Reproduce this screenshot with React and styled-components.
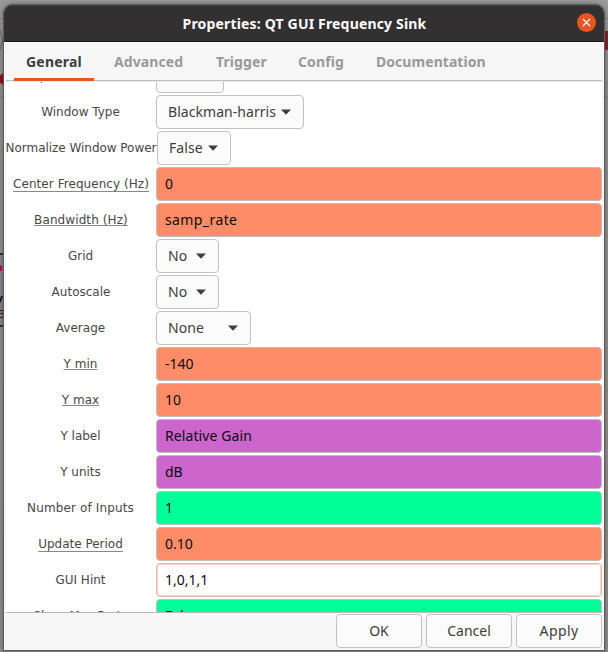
import React from 'react';
import styled, { createGlobalStyle } from 'styled-components';

const GlobalStyle = createGlobalStyle`
  *, *::before, *::after { box-sizing: border-box; }
  body { margin: 0; overflow: hidden; }
`;

const Desktop = styled.div`
  position: relative;
  width: 608px;
  height: 652px;
  padding: 5px 4px 2px 4px;
  background: linear-gradient(#9b9b9b, #8f8f8e 60px, #8e8d8b);
  overflow: hidden;
  font-family: "Noto Sans", "Open Sans", sans-serif;
`;

const Backdrop = styled.svg`
  position: absolute;
  inset: 0;
`;

const Dialog = styled.div`
  position: relative;
  display: flex;
  flex-direction: column;
  height: 645px;
  background: #f6f6f6;
  border-radius: 8px 8px 0 0;
  overflow: hidden;
  box-shadow: 0 0 0 1px #5c5c5c, 0 0 5px 1px rgba(0, 0, 0, 0.35);
`;

const TitleBar = styled.header`
  position: relative;
  display: flex;
  align-items: center;
  justify-content: center;
  flex: none;
  height: 37px;
  padding-left: 1px;
  background: #333031;
  border-top: 1px solid #454243;
  border-bottom: 1px solid #1c1a1b;
  color: #fff;
  font-size: 14px;
  font-weight: 700;
  letter-spacing: 0.17px;
`;

const CloseButton = styled.button`
  position: absolute;
  top: 7px;
  right: 8.5px;
  display: flex;
  align-items: center;
  justify-content: center;
  width: 19px;
  height: 19px;
  padding: 0;
  border: 0;
  border-radius: 50%;
  background: #e95420;
`;

const Tabs = styled.nav`
  display: flex;
  flex: none;
  height: 39px;
  margin: 0 2px;
  padding-left: 8px;
  border-bottom: 1px solid #bfbfbf;
`;

const Tab = styled.button`
  width: ${(p) => p.$width}px;
  height: 39px;
  margin-right: ${(p) => p.$gap || 0}px;
  padding: 3px 0 0 12px;
  border: 0;
  border-bottom: 3px solid ${(p) => (p.$active ? '#e95420' : 'transparent')};
  background: none;
  color: ${(p) => (p.$active ? '#3d3d3d' : '#999')};
  font: 700 14px/20px "Noto Sans", sans-serif;
  letter-spacing: ${(p) => p.$spacing}px;
  text-align: left;
  white-space: nowrap;
`;

const Viewport = styled.main`
  flex: none;
  height: 531px;
  margin: 0 2px;
  background: #fff;
  border-top: 1px solid #ececec;
  overflow: hidden;
`;

const Form = styled.div`
  display: grid;
  grid-auto-rows: 34px;
  row-gap: 2px;
  margin-top: -23px;
`;

const Row = styled.div`
  display: grid;
  grid-template-columns: 150px 446px;
  align-items: stretch;
`;

const Label = styled.label`
  align-self: center;
  justify-self: center;
  margin-right: ${(p) => (p.$wide ? 0 : 1)}px;
  color: #474747;
  font: 12px/16px "DejaVu Sans", sans-serif;
  letter-spacing: ${(p) => p.$spacing || 0}px;
  white-space: nowrap;
  text-decoration: ${(p) => (p.$underline === undefined ? 'none' : 'underline')};
  text-decoration-color: #888;
  text-decoration-thickness: 1px;
  text-decoration-skip-ink: none;
  text-underline-offset: ${(p) => p.$underline || 0}px;
`;

const fills = {
  real: '#ff8c69',
  string: '#cc66cc',
  int: '#00ff99',
  hint: '#ffffff',
};

const Entry = styled.div`
  display: flex;
  align-items: center;
  padding: 0 0 2px 8px;
  border: 1px solid #bebebe;
  border-radius: 4px;
  background: ${(p) => fills[p.$kind]};
  color: #0c0c0c;
  font-size: 14px;
  letter-spacing: ${(p) => p.$spacing || 0}px;
  ${(p) => p.$kind === 'hint' && 'border-color: #e8b5a8; box-shadow: inset 0 0 0 1px #f8d8ce;'}
`;

const Select = styled.button`
  display: flex;
  align-items: center;
  justify-content: space-between;
  width: ${(p) => p.$width}px;
  margin-left: ${(p) => p.$indent || 0}px;
  padding: 0 12px 2px 11px;
  border: 1px solid #c2c2c2;
  border-radius: 4px;
  background: #fbfbfb;
  color: #3d3d3d;
  font: 14px "Noto Sans", sans-serif;
  letter-spacing: ${(p) => p.$spacing || 0}px;
`;

const Footer = styled.footer`
  display: flex;
  justify-content: flex-end;
  gap: 4px;
  flex: 1;
  margin: 0 2px;
  padding-top: 1px;
  border-top: 1px solid #b8b8b8;
`;

const Action = styled.button`
  width: 86px;
  height: 34px;
  padding: 0 0 2px;
  border: 1px solid #c2c2c2;
  border-radius: 4px;
  background: #fbfbfb;
  color: #3d3d3d;
  font: 14px "Noto Sans", sans-serif;
  letter-spacing: ${(p) => p.$spacing || 0}px;
`;

const ArrowIcon = styled.svg`
  flex: none;
  margin-top: 2px;
`;

const Arrow = () => (
  <ArrowIcon width="10" height="6" viewBox="0 0 10 6">
    <path d="M0 .5h10L5 5.8z" fill="#3d3d3d" />
  </ArrowIcon>
);

const tabs = [
  { text: 'General', width: 80, gap: 8, spacing: 0.2 },
  { text: 'Advanced', width: 102, spacing: 0.1 },
  { text: 'Trigger', width: 82, spacing: 0.1 },
  { text: 'Config', width: 78, spacing: 0.1 },
  { text: 'Documentation', width: 130, spacing: 0.05 },
];

const rows = [
  { label: 'Spectrum Width', select: '', width: 68 },
  { label: 'Window Type', select: 'Blackman-harris', width: 148, spacing: 0.05 },
  { label: 'Normalize Window Power', wide: true, ls: -0.04, select: 'False', width: 74, indent: 1, spacing: 0.1 },
  { label: 'Center Frequency (Hz)', wide: true, underline: 3, ls: 0.06, kind: 'real', value: '0' },
  { label: 'Bandwidth (Hz)', wide: true, underline: 1, ls: 0.1, kind: 'real', value: 'samp_rate', spacing: 0.4 },
  { label: 'Grid', select: 'No', width: 63 },
  { label: 'Autoscale', wide: true, select: 'No', width: 63 },
  { label: 'Average', select: 'None', width: 95, spacing: 0.1 },
  { label: 'Y min', underline: 1, kind: 'real', value: '-140' },
  { label: 'Y max', underline: 1, kind: 'real', value: '10' },
  { label: 'Y label', kind: 'string', value: 'Relative Gain', spacing: 0.1 },
  { label: 'Y units', kind: 'string', value: 'dB' },
  { label: 'Number of Inputs', ls: 0.14, kind: 'int', value: '1' },
  { label: 'Update Period', underline: 3, kind: 'real', value: '0.10' },
  { label: 'GUI Hint', kind: 'hint', value: '1,0,1,1' },
  { label: 'Show Msg Ports', kind: 'int', value: 'False' },
];

export default function App() {
  return (
    <Desktop>
      <GlobalStyle />
      <Backdrop width="608" height="652">
        <path d="M0 18.5h608M0 97.5h608" stroke="#777" />
        <path d="M0 30l4 16M4 36l-4 14" stroke="#666" />
        <circle cx="5" cy="79" r="6" fill="#8e1024" />
        <rect x="600" y="31" width="12" height="19" fill="#8e1f32" />
        <rect x="-1" y="254" width="8" height="72" fill="#85838c" stroke="#333" strokeWidth="2" />
        <g fontFamily="DejaVu Sans" fontSize="11">
          <text x="-5" y="271" fill="#b0103c" fontWeight="700">ne</text>
          <text x="-4" y="302" fill="#111" fontWeight="700">y</text>
          <text x="-2" y="318" fill="#321">3</text>
        </g>
      </Backdrop>
      <Dialog>
        <TitleBar>
          Properties: QT GUI Frequency Sink
          <CloseButton aria-label="Close">
            <svg width="9" height="9" viewBox="0 0 9 9">
              <path d="M1 1l7 7M8 1l-7 7" stroke="#fff" strokeWidth="1.2" />
            </svg>
          </CloseButton>
        </TitleBar>
        <Tabs>
          {tabs.map((t, i) => (
            <Tab key={t.text} $active={i === 0} $width={t.width} $gap={t.gap} $spacing={t.spacing}>
              {t.text}
            </Tab>
          ))}
        </Tabs>
        <Viewport>
          <Form>
            {rows.map((r) => (
              <Row key={r.label}>
                <Label $underline={r.underline} $spacing={r.ls} $wide={r.wide}>{r.label}</Label>
                {r.kind ? (
                  <Entry $kind={r.kind} $spacing={r.spacing}>{r.value}</Entry>
                ) : (
                  <Select $width={r.width} $indent={r.indent} $spacing={r.spacing}>
                    {r.select}
                    <Arrow />
                  </Select>
                )}
              </Row>
            ))}
          </Form>
        </Viewport>
        <Footer>
          <Action>OK</Action>
          <Action>Cancel</Action>
          <Action $spacing={0.4}>Apply</Action>
        </Footer>
      </Dialog>
    </Desktop>
  );
}
